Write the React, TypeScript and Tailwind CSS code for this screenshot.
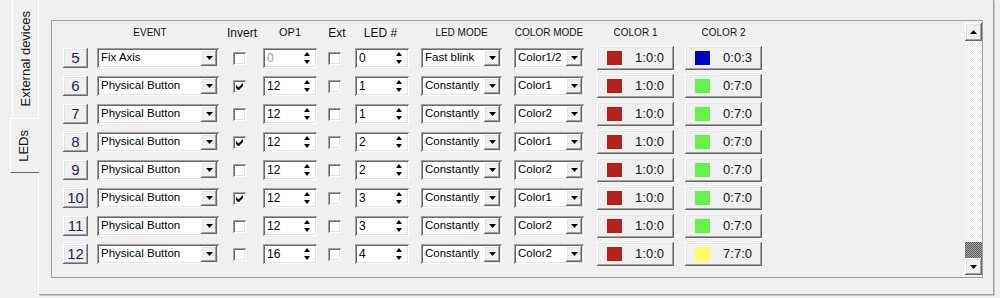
import React from 'react';

type Row = {
  n: number;
  event: string;
  invert: boolean;
  op1: string;
  op1Disabled?: boolean;
  led: string;
  ledMode: string;
  colorMode: string;
  c1: string;
  c1Text: string;
  c2: string;
  c2Text: string;
};

const RED = '#b3221b';
const GREEN = '#66f24a';

const rows: Row[] = [
  { n: 5, event: 'Fix Axis', invert: false, op1: '0', op1Disabled: true, led: '0', ledMode: 'Fast blink', colorMode: 'Color1/2', c1: RED, c1Text: '1:0:0', c2: '#0000c8', c2Text: '0:0:3' },
  { n: 6, event: 'Physical Button', invert: true, op1: '12', led: '1', ledMode: 'Constantly', colorMode: 'Color1', c1: RED, c1Text: '1:0:0', c2: GREEN, c2Text: '0:7:0' },
  { n: 7, event: 'Physical Button', invert: false, op1: '12', led: '1', ledMode: 'Constantly', colorMode: 'Color2', c1: RED, c1Text: '1:0:0', c2: GREEN, c2Text: '0:7:0' },
  { n: 8, event: 'Physical Button', invert: true, op1: '12', led: '2', ledMode: 'Constantly', colorMode: 'Color1', c1: RED, c1Text: '1:0:0', c2: GREEN, c2Text: '0:7:0' },
  { n: 9, event: 'Physical Button', invert: false, op1: '12', led: '2', ledMode: 'Constantly', colorMode: 'Color2', c1: RED, c1Text: '1:0:0', c2: GREEN, c2Text: '0:7:0' },
  { n: 10, event: 'Physical Button', invert: true, op1: '12', led: '3', ledMode: 'Constantly', colorMode: 'Color1', c1: RED, c1Text: '1:0:0', c2: GREEN, c2Text: '0:7:0' },
  { n: 11, event: 'Physical Button', invert: false, op1: '12', led: '3', ledMode: 'Constantly', colorMode: 'Color2', c1: RED, c1Text: '1:0:0', c2: GREEN, c2Text: '0:7:0' },
  { n: 12, event: 'Physical Button', invert: false, op1: '16', led: '4', ledMode: 'Constantly', colorMode: 'Color2', c1: RED, c1Text: '1:0:0', c2: '#fdfd62', c2Text: '7:7:0' },
];

// classic win32 bevels
const raised =
  'bg-[#f0f0f0] shadow-[inset_-1px_-1px_0_#696969,inset_1px_1px_0_#ffffff,inset_-2px_-2px_0_#a0a0a0,inset_2px_2px_0_#e3e3e3]';
const sunken =
  'bg-white shadow-[inset_1px_1px_0_#a0a0a0,inset_-1px_-1px_0_#ffffff,inset_2px_2px_0_#696969,inset_-2px_-2px_0_#e3e3e3]';

const cols = {
  num: 'ml-[11px] w-[25px]',
  event: 'ml-[9px] w-[122px]',
  invert: 'ml-[14px] w-[13px]',
  op1: 'ml-[17px] w-[54px]',
  ext: 'ml-[11px] w-[13px]',
  led: 'ml-[14px] w-[54px]',
  ledMode: 'ml-[12px] w-[81px]',
  colorMode: 'ml-[12px] w-[70px]',
  c1: 'ml-[13px] w-[77px]',
  c2: 'ml-[11px] w-[77px]',
};

const cell = 'shrink-0 flex items-center justify-center whitespace-nowrap';

const ArrowDown = ({ w = 7, h = 4 }: { w?: number; h?: number }) => (
  <svg width={w} height={h} viewBox={`0 0 ${w} ${h}`}>
    <path d={`M0 0H${w}L${w / 2} ${h}Z`} fill="#000" />
  </svg>
);

const ArrowUp = ({ w = 7, h = 4 }: { w?: number; h?: number }) => (
  <svg width={w} height={h} viewBox={`0 0 ${w} ${h}`}>
    <path d={`M0 ${h}H${w}L${w / 2} 0Z`} fill="#000" />
  </svg>
);

const Combo = ({ text }: { text: string }) => (
  <div className={`w-full h-[20px] flex items-center ${sunken}`}>
    <span className="flex-1 pl-[4px] text-[11.5px] text-black truncate">{text}</span>
    <div className={`w-[16px] h-[16px] mr-[2px] flex items-center justify-center ${raised}`}>
      <ArrowDown />
    </div>
  </div>
);

const Spin = ({ value, disabled }: { value: string; disabled?: boolean }) => (
  <div className={`w-full h-[20px] flex items-center ${sunken}`}>
    <span className={`flex-1 pl-[4px] text-[12px] ${disabled ? 'text-[#a0a0a0]' : 'text-black'}`}>{value}</span>
    <div className="mr-[7px] flex flex-col items-center gap-[4px]">
      <ArrowUp w={6} h={4} />
      <ArrowDown w={6} h={4} />
    </div>
  </div>
);

const Check = ({ checked }: { checked: boolean }) => (
  <div className={`w-[13px] h-[13px] flex items-center justify-center ${sunken}`}>
    {checked && (
      <svg width="7" height="7" viewBox="0 0 7 7">
        <path d="M0 2v3l2 2h1l4-4V0L2.5 4.5Z" fill="#000" />
      </svg>
    )}
  </div>
);

const ColorButton = ({ color, text }: { color: string; text: string }) => (
  <div className={`w-full h-[24px] flex items-center ${raised}`}>
    <div className="ml-[10px] w-[15px] h-[14px]" style={{ backgroundColor: color }} />
    <span className="flex-1 text-right pr-[10px] text-[13px] text-[#111]">{text}</span>
  </div>
);

const App: React.FC = () => {
  return (
    <div className="w-[1000px] h-[298px] bg-[#f0f0f0] flex overflow-hidden font-['Liberation_Sans',Arial,sans-serif] text-black">
      {/* vertical tabs */}
      <div className="w-[39px] shrink-0 flex flex-col">
        <div className="h-[118px] ml-[12px] border-l border-r border-white flex items-center justify-center">
          <span className="[writing-mode:vertical-rl] rotate-180 text-[13px] text-[#111] leading-none">External devices</span>
        </div>
        <div className="h-[55px] ml-[10px] border-l border-t border-white border-b border-b-[#696969] flex items-center justify-center pr-[3px]">
          <span className="[writing-mode:vertical-rl] rotate-180 text-[13px] text-[#111] leading-none">LEDs</span>
        </div>
        <div className="flex-1 border-r border-white mb-[3px]" />
      </div>

      {/* tab page */}
      <div className="w-[955px] h-[295px] shrink-0 border-r border-b border-[#a0a0a0] shadow-[1px_1px_0_#c8c8c8]">
        <div className="ml-[12px] mt-[20px] w-[932px] h-[258px] border border-[#a0a0a0] flex">
          <div className="flex-1 flex flex-col">
            {/* header */}
            <div className="h-[23px] flex items-center text-[#111]">
              <div className={`${cell} ${cols.num}`} />
              <div className={`${cell} ${cols.event} pr-[16px] text-[10px]`}>EVENT</div>
              <div className={`${cell} ${cols.invert} pl-[5px] text-[12px]`}>Invert</div>
              <div className={`${cell} ${cols.op1} text-[11px]`}>OP1</div>
              <div className={`${cell} ${cols.ext} pl-[5px] text-[12px]`}>Ext</div>
              <div className={`${cell} ${cols.led} pr-[3px] text-[12px]`}>LED #</div>
              <div className={`${cell} ${cols.ledMode} text-[10px]`}>LED MODE</div>
              <div className={`${cell} ${cols.colorMode} text-[10px]`}>COLOR MODE</div>
              <div className={`${cell} ${cols.c1} text-[10px]`}>COLOR 1</div>
              <div className={`${cell} ${cols.c2} text-[10px]`}>COLOR 2</div>
            </div>
            {rows.map(r => (
              <div key={r.n} className="h-[28px] flex items-center">
                <div className={`${cell} ${cols.num}`}>
                  <div className={`w-full h-[20px] flex items-center justify-center pb-[1px] ${raised}`}>
                    <span className="font-['Liberation_Sans_Narrow','Liberation_Sans',sans-serif] text-[15px] text-[#22264f] leading-none">{r.n}</span>
                  </div>
                </div>
                <div className={`${cell} ${cols.event}`}>
                  <Combo text={r.event} />
                </div>
                <div className={`${cell} ${cols.invert}`}>
                  <Check checked={r.invert} />
                </div>
                <div className={`${cell} ${cols.op1}`}>
                  <Spin value={r.op1} disabled={r.op1Disabled} />
                </div>
                <div className={`${cell} ${cols.ext}`}>
                  <Check checked={false} />
                </div>
                <div className={`${cell} ${cols.led}`}>
                  <Spin value={r.led} />
                </div>
                <div className={`${cell} ${cols.ledMode}`}>
                  <Combo text={r.ledMode} />
                </div>
                <div className={`${cell} ${cols.colorMode}`}>
                  <Combo text={r.colorMode} />
                </div>
                <div className={`${cell} ${cols.c1}`}>
                  <ColorButton color={r.c1} text={r.c1Text} />
                </div>
                <div className={`${cell} ${cols.c2}`}>
                  <ColorButton color={r.c2} text={r.c2Text} />
                </div>
              </div>
            ))}
          </div>

          {/* scrollbar */}
          <div className="w-[17px] my-[2px] flex flex-col">
            <div className={`h-[18px] flex items-center justify-center ${raised}`}>
              <ArrowUp />
            </div>
            <div className="flex-1 bg-[image:repeating-conic-gradient(#ffffff_0_25%,#ebebeb_0_50%)] bg-[length:2px_2px]" />
            <div className="h-[16px] bg-[image:repeating-conic-gradient(#5c5c5c_0_25%,#a6a6a6_0_50%)] bg-[length:2px_2px]" />
            <div className={`h-[17px] flex items-center justify-center ${raised}`}>
              <ArrowDown />
            </div>
          </div>
        </div>
      </div>
    </div>
  );
};

export default App;
